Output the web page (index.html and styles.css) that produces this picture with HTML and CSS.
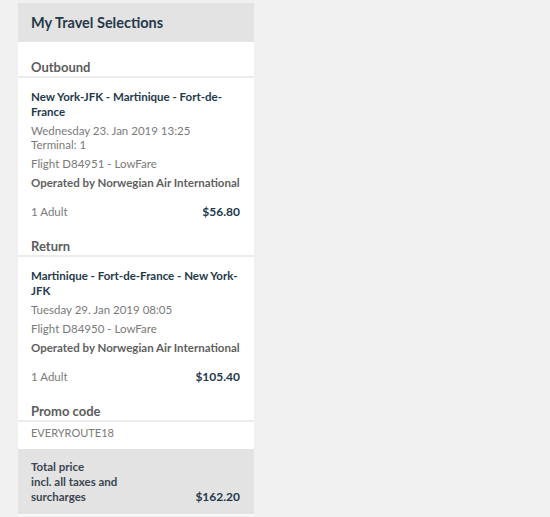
FILE: index.html
```html
<!DOCTYPE html>
<html lang="en">
<head>
<meta charset="UTF-8" />
<meta name="viewport" content="width=device-width, initial-scale=1" />
<title>My Travel Selections</title>
<link rel="stylesheet" href="styles.css">
</head>
<body>

<div class="panel">
  <div class="panel-head">My Travel Selections</div>

  <!-- Outbound -->
  <div class="section-title">Outbound</div>
  <div class="leg">
    <div class="route">New York-JFK - Martinique - Fort-de-France</div>
    <div class="when">Wednesday 23. Jan 2019 13:25<br>Terminal: 1</div>
    <div class="flight">Flight D84951 - LowFare</div>
    <div class="operator">Operated by Norwegian Air International</div>
    <div class="price-row">
      <span>1 Adult</span>
      <span class="price">$56.80</span>
    </div>
  </div>

  <!-- Return -->
  <div class="section-title">Return</div>
  <div class="leg">
    <div class="route">Martinique - Fort-de-France - New York-JFK</div>
    <div class="when">Tuesday 29. Jan 2019 08:05</div>
    <div class="flight">Flight D84950 - LowFare</div>
    <div class="operator">Operated by Norwegian Air International</div>
    <div class="price-row">
      <span>1 Adult</span>
      <span class="price">$105.40</span>
    </div>
  </div>

  <!-- Promo -->
  <div class="section-title">Promo code</div>
  <div class="promo">EVERYROUTE18</div>

  <div class="total">
    <div class="total-label">Total price<br>incl. all taxes and surcharges</div>
    <div class="price">$162.20</div>
  </div>
</div>

</body>
</html>
```

FILE: styles.css
```css
body, html {
  margin: 0; padding: 0;
  background: #f0f0f0;
  font-family: Lato, 'Open Sans', sans-serif;
}
body {
  padding: 3px 18px;
}
.panel {
  width: 236px;
  background: #fff;
  border-bottom: 2px solid #f8f8f8;
}
.panel-head {
  background: #e3e3e3;
  height: 39px;
  line-height: 39px;
  padding: 0 13px;
  font-size: 14.5px;
  font-weight: bold;
  color: #26394a;
}
.section-title {
  padding: 17px 13px 0;
  line-height: 17px;
  font-size: 13px;
  font-weight: bold;
  color: #5c5c5c;
  border-bottom: 2px solid #ececec;
}
.leg {
  padding: 11px 14px 0 13px;
  font-size: 11.5px;
  color: #7a7a7a;
}
.route {
  font-weight: bold;
  color: #23394b;
  line-height: 15px;
}
.when {
  margin-top: 5px;
  line-height: 14px;
}
.flight {
  margin-top: 2px;
  line-height: 19px;
}
.operator {
  line-height: 19px;
  font-weight: bold;
  color: #5f5f5f;
}
.price-row {
  display: flex;
  justify-content: space-between;
  margin-top: 10px;
  line-height: 19px;
}
.price {
  font-weight: bold;
  color: #23394b;
  font-size: 12px;
}
.promo {
  padding: 4px 13px 9px;
  line-height: 14px;
  font-size: 11px;
  color: #7a7a7a;
}
.total {
  background: #e3e3e3;
  padding: 10px 14px 10px 13px;
  display: flex;
  justify-content: space-between;
  align-items: flex-end;
  font-size: 11.5px;
  line-height: 15px;
}
.total-label {
  width: 125px;
  font-weight: bold;
  color: #3b4650;
}
.total .price {
  line-height: 15px;
}
```
